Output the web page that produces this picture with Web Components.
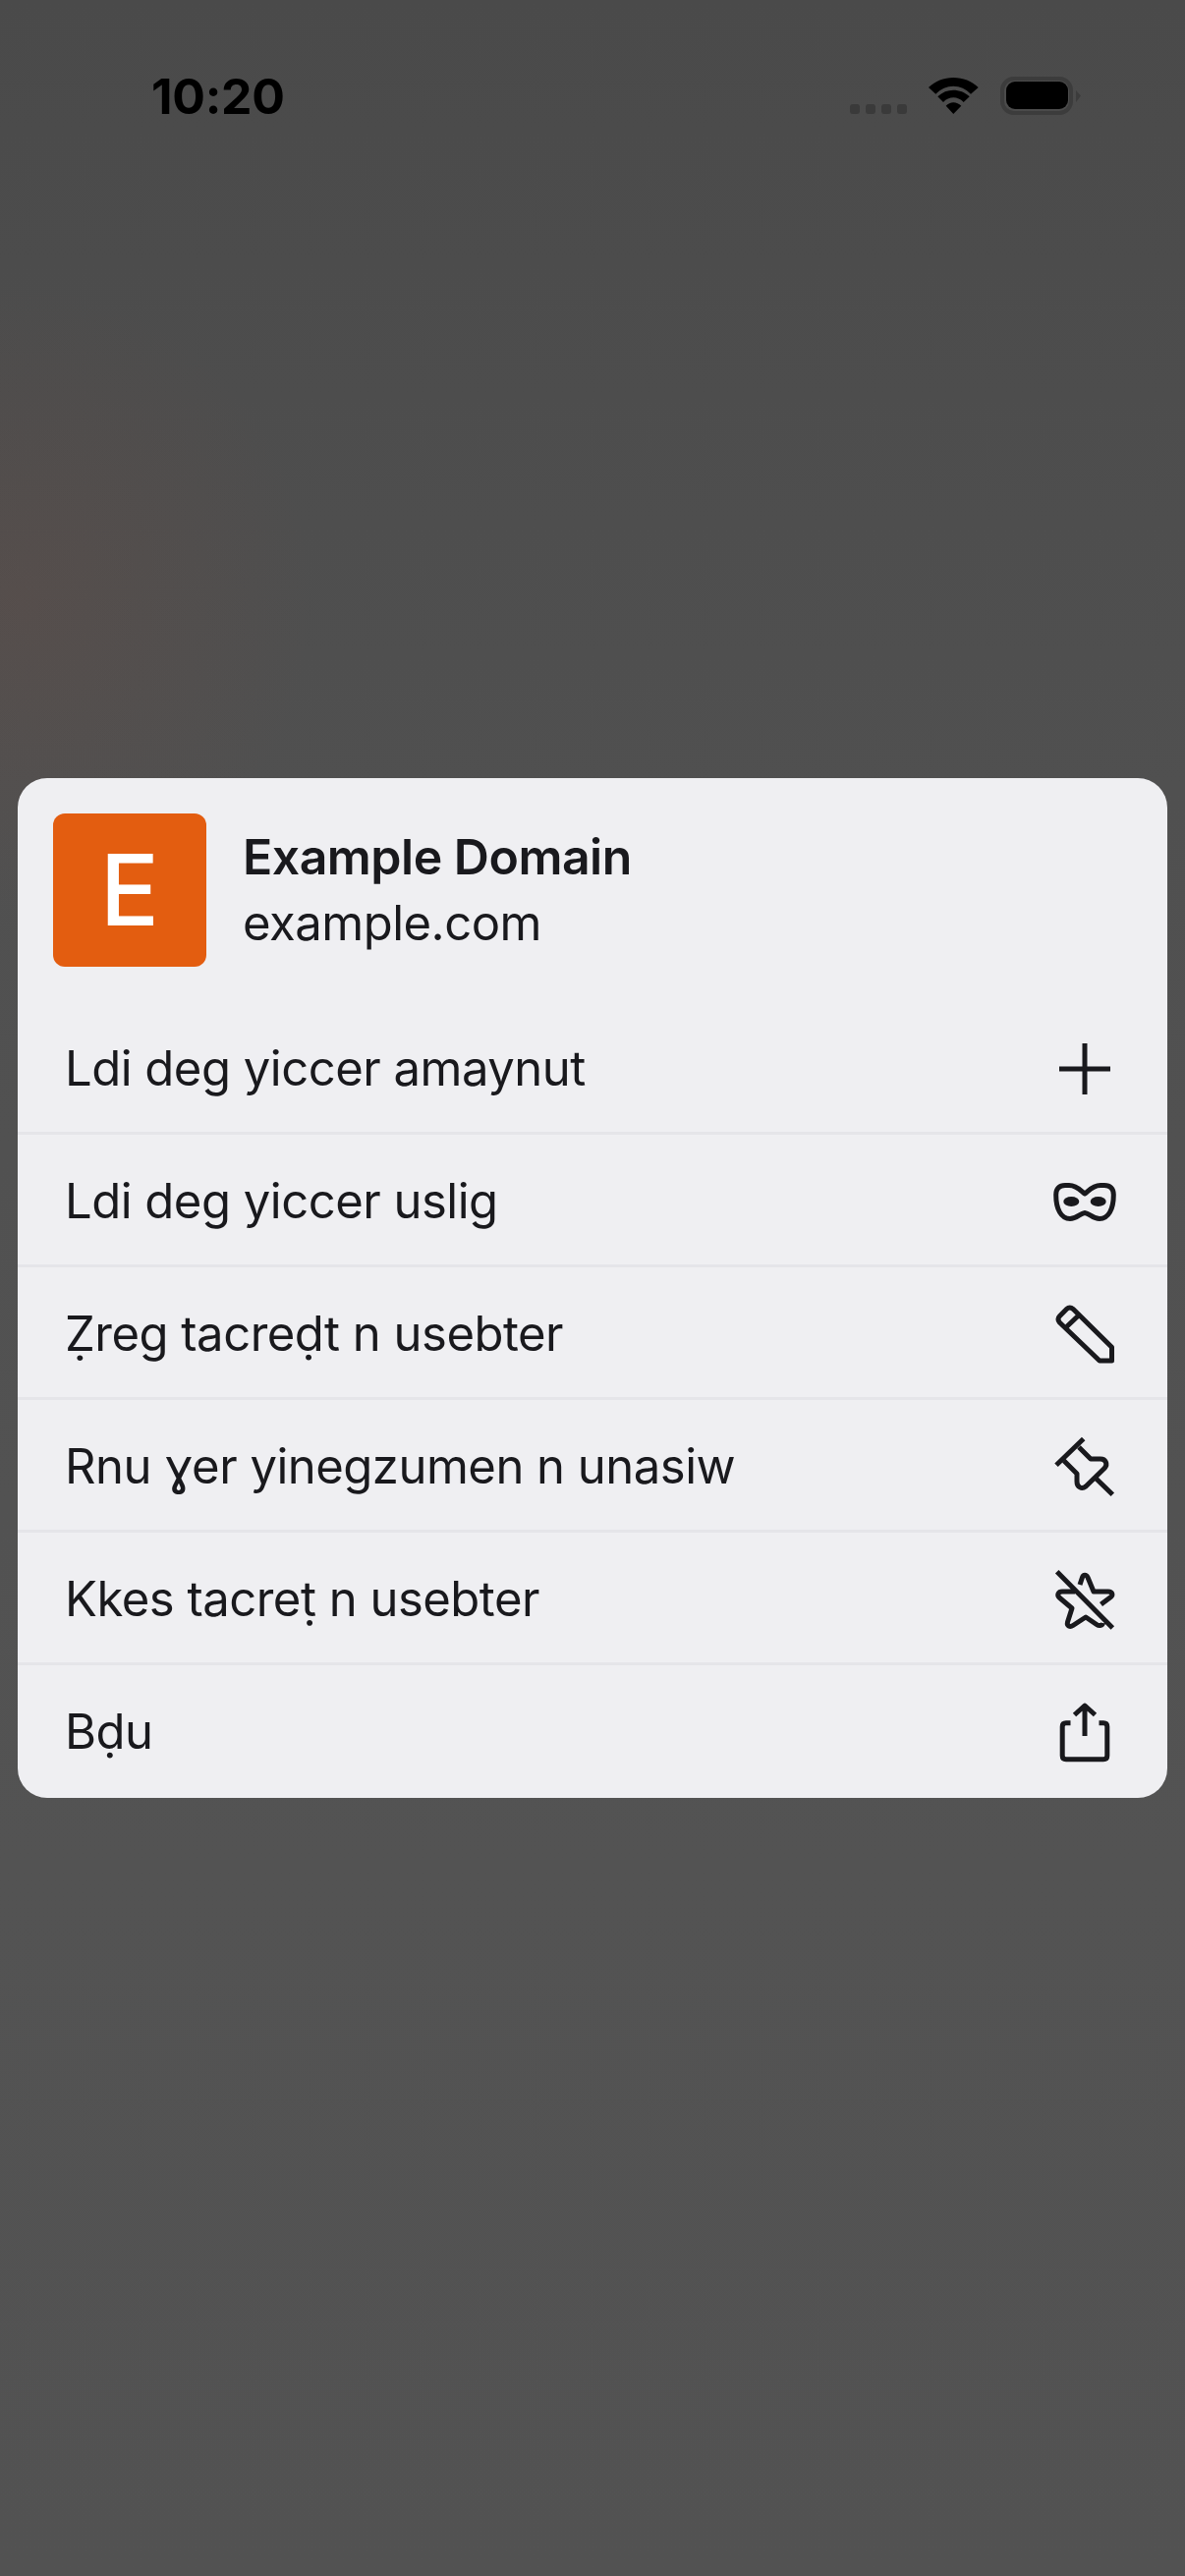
<!DOCTYPE html>
<html>
<head>
<meta charset="utf-8">
<title>Menu</title>
<style>
    html, body {
        margin: 0;
        height: 2622px;
        overflow: hidden;
    }
    body {
        font-family: Inter, "Noto Sans", sans-serif;
        background:
            radial-gradient(ellipse 300px 320px at 20px 610px, rgba(130, 75, 60, 0.14), rgba(130, 75, 60, 0) 100%),
            linear-gradient(#4a4a4a 0, #505050 800px, #535353 1900px, #525252 100%);
    }
    menu-row svg {
        width: 64px;
        height: 64px;
        fill: none;
        stroke: #19191d;
        stroke-width: 5;
        stroke-linejoin: round;
    }
</style>
</head>
<body>
<status-bar time="10:20"></status-bar>
<context-sheet>
    <sheet-header slot="header" letter="E" title="Example Domain" url="example.com"></sheet-header>
    <menu-row>Ldi deg yiccer amaynut
        <svg slot="icon" viewBox="0 0 64 64"><path d="M6 32H58M32 6V58"/></svg>
    </menu-row>
    <menu-row>Ldi deg yiccer uslig
        <svg slot="icon" viewBox="0 0 64 64"><path d="M32 24C28 21 24 15.5 16 15.5H12C6 15.5 2.7 19 2.7 25C2.7 40 8 49.5 17 49.5C24 49.5 27 44 32 43.5C37 44 40 49.5 47 49.5C56 49.5 61.3 40 61.3 25C61.3 19 58 15.5 52 15.5H48C40 15.5 36 21 32 24Z"/><ellipse cx="18.3" cy="32" rx="8" ry="5" fill="#19191d" stroke="none"/><ellipse cx="45.7" cy="32" rx="8" ry="5" fill="#19191d" stroke="none"/></svg>
    </menu-row>
    <menu-row>Ẓreg tacreḍt n usebter
        <svg slot="icon" viewBox="0 0 64 64"><path d="M47 59L6.3 20C4.5 18 4.5 15.5 6.3 13.7L13.7 6.3C15.5 4.5 18 4.5 20 6.3L59.5 45.3V59ZM14 24L28 10.7"/></svg>
    </menu-row>
    <menu-row>Rnu ɣer yinegzumen n unasiw
        <svg slot="icon" viewBox="0 0 64 64"><path d="M3 30.2L30.7 3.5M43 43.5L60.3 60.2M11 26L24 39V47C24 53 29 55 33 52L52 33.5C56 29 53 24 48 24H38L26 12"/></svg>
    </menu-row>
    <menu-row>Kkes tacreṭ n usebter
        <svg slot="icon" viewBox="0 0 64 64"><path d="M3.7 3.8L60.3 61M27 17L29.5 9.5C30.5 6.5 33.5 6.5 35 9.5L41 24H56C60 24 61 27.5 58.5 29.5L48.5 37M22 24H9C5 24 3.5 27.5 6 30L19 41L14.5 55C13.5 59 17 60.5 20 58.5L33 50L44 57.5C47 59.5 50 58.5 50.5 56"/></svg>
    </menu-row>
    <menu-row>Bḍu
        <svg slot="icon" viewBox="0 0 64 64"><path d="M17.5 22.7H13C10.5 22.7 9.2 24 9.2 26.5V56C9.2 58.5 10.5 59.7 13 59.7H51C53.5 59.7 54.8 58.5 54.8 56V26.5C54.8 24 53.5 22.7 51 22.7H46.5M21.5 14.5L32 5L42.5 14.5M32 6V36"/></svg>
    </menu-row>
</context-sheet>
<script>
class StatusBar extends HTMLElement {
    constructor() {
        super();
        this._root = this.attachShadow({mode:"open"});
        this._root.innerHTML = `
            <style>
                :host {
                    display: flex;
                    align-items: flex-start;
                    justify-content: space-between;
                    height: 792px;
                    box-sizing: border-box;
                    padding: 78px 106px 0 154px;
                }
                .time {
                    font: 700 50px/40px "Inter", sans-serif;
                    letter-spacing: -0.3px;
                    color: #000;
                }
                .icons {
                    display: flex;
                    align-items: flex-start;
                }
                .dots {
                    display: flex;
                    gap: 6px;
                    margin: 28px 22px 0 0;
                }
                .dots i {
                    width: 10px;
                    height: 10px;
                    border-radius: 3px;
                    background: #3a3a3a;
                }
                svg { display: block; }
            </style>
            <div class="time">${this.getAttribute("time")}</div>
            <div class="icons">
                <div class="dots"><i></i><i></i><i></i><i></i></div>
                <svg width="51" height="38" viewBox="0 0 51 38" style="margin:1px 22px 0 0">
                    <path d="M0 10C7 3.5 15.5 0 25.3 0C35 0 44 3.5 50.7 10L43 16.7C38 11.5 32 8.7 25.3 8.7C18.5 8.7 12.5 11.5 7.3 16.7Z M9.3 19.3C14 14.8 19.5 12.7 25.3 12.7C31 12.7 37 14.8 41.7 19.3L35.7 25C32.5 21.8 29 20.3 25.3 20.3C21.5 20.3 18 21.8 15 25Z M17.7 28.7C19.8 26.5 22.5 25.3 25.3 25.3C28.2 25.3 31 26.5 33.3 28.7L25.3 37Z" fill="#000"/>
                </svg>
                <svg width="82" height="39" viewBox="0 0 82 39">
                    <rect x="2" y="2" width="70" height="35" rx="12" fill="none" stroke="#3c3c3c" stroke-width="4"/>
                    <rect x="6" y="5" width="63" height="28" rx="9" fill="#000"/>
                    <path d="M77 14L82 19.5L77 26Z" fill="#3c3c3c"/>
                </svg>
            </div>
        `;
    }
}
window.customElements.define("status-bar", StatusBar);

class ContextSheet extends HTMLElement {
    constructor() {
        super();
        this._root = this.attachShadow({mode:"open"});
        this._root.innerHTML = `
            <style>
                :host {
                    display: block;
                    margin: 0 18px;
                    width: 1170px;
                    padding-bottom: 3px;
                    border-radius: 30px;
                    background: #efeff2;
                    overflow: hidden;
                }
            </style>
            <slot name="header"></slot>
            <slot></slot>
        `;
    }
}
window.customElements.define("context-sheet", ContextSheet);

class SheetHeader extends HTMLElement {
    constructor() {
        super();
        this._root = this.attachShadow({mode:"open"});
        this._root.innerHTML = `
            <style>
                :host {
                    display: flex;
                    align-items: flex-start;
                    height: 232px;
                    box-sizing: border-box;
                    padding: 36px 36px 0;
                    gap: 37px;
                    color: #19191d;
                }
                .letter {
                    width: 156px;
                    height: 156px;
                    border-radius: 12px;
                    background: #e35d10;
                    color: #fff;
                    font: 500 100px/156px "Inter", sans-serif;
                    text-align: center;
                }
                .text {
                    display: flex;
                    flex-direction: column;
                    padding-top: 11px;
                }
                .title { font: 600 50px/67px "Inter", sans-serif; letter-spacing: -0.5px; }
                .url { font: 400 49px/68px "Inter", sans-serif; letter-spacing: -0.5px; }
            </style>
            <div class="letter">${this.getAttribute("letter")}</div>
            <div class="text">
                <div class="title">${this.getAttribute("title")}</div>
                <div class="url">${this.getAttribute("url")}</div>
            </div>
        `;
    }
}
window.customElements.define("sheet-header", SheetHeader);

class MenuRow extends HTMLElement {
    constructor() {
        super();
        this._root = this.attachShadow({mode:"open"});
        this._root.innerHTML = `
            <style>
                :host {
                    display: flex;
                    align-items: center;
                    justify-content: space-between;
                    height: 128px;
                    padding: 0 52px 0 48px;
                    font: 400 49px/60px "Inter", "Noto Sans", sans-serif;
                    letter-spacing: -0.5px;
                    color: #19191d;
                }
                :host(:not(:first-of-type)) {
                    border-top: 3px solid #e5e5e9;
                    padding-top: 4px;
                }
                .icon { display: flex; width: 64px; height: 64px; }
            </style>
            <div class="label"><slot></slot></div>
            <div class="icon"><slot name="icon"></slot></div>
        `;
    }
}
window.customElements.define("menu-row", MenuRow);
</script>
</body>
</html>
